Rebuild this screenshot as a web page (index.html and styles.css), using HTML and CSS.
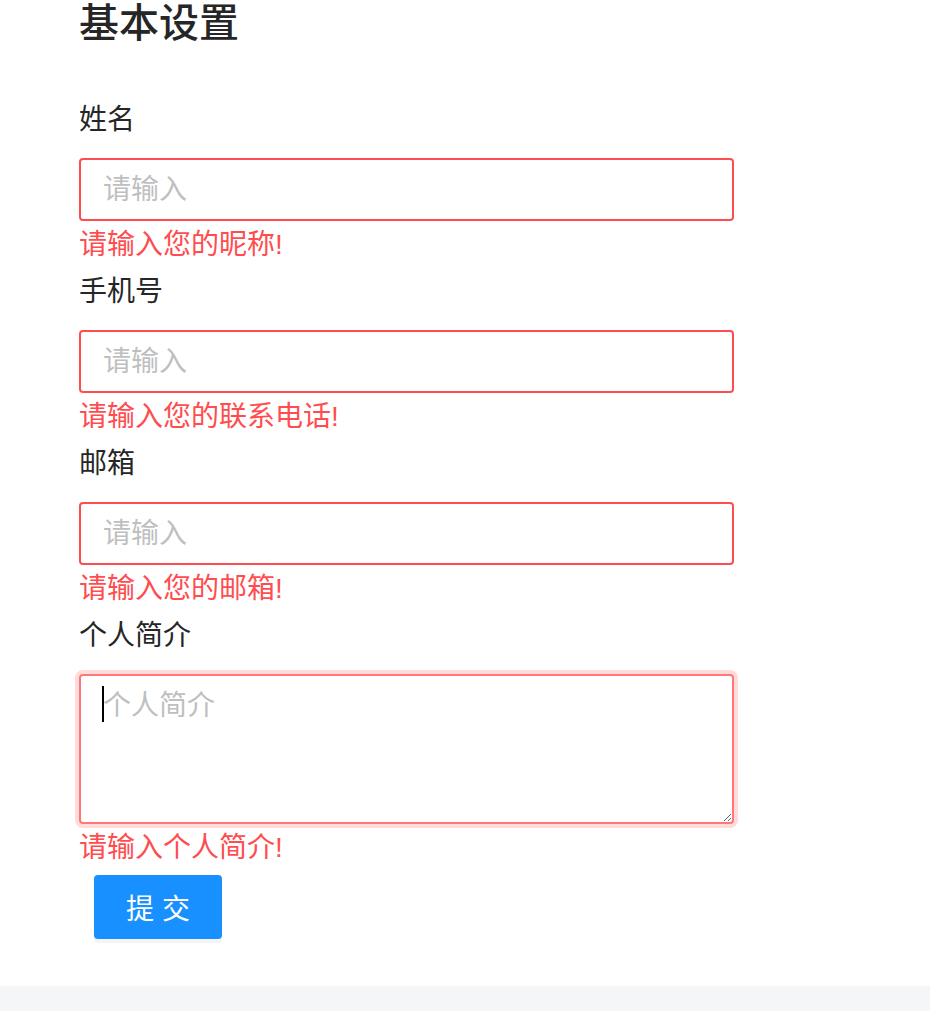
FILE: index.html
```html
<!DOCTYPE html>
<html lang="zh-CN">
<head>
<meta charset="utf-8">
<title>基本设置</title>
<link rel="stylesheet" href="styles.css">
</head>
<body>
<div class="page">
  <main class="content">
    <h2 class="title">基本设置</h2>
    <form class="form">
      <div class="item">
        <label class="label">姓名</label>
        <input class="input error" type="text" placeholder="请输入">
        <div class="explain">请输入您的昵称!</div>
      </div>
      <div class="item">
        <label class="label">手机号</label>
        <input class="input error" type="text" placeholder="请输入">
        <div class="explain">请输入您的联系电话!</div>
      </div>
      <div class="item">
        <label class="label">邮箱</label>
        <input class="input error" type="text" placeholder="请输入">
        <div class="explain">请输入您的邮箱!</div>
      </div>
      <div class="item">
        <label class="label">个人简介</label>
        <div class="textarea-wrap">
          <textarea class="textarea error focused" placeholder="个人简介"></textarea>
          <span class="caret"></span>
        </div>
        <div class="explain">请输入个人简介!</div>
      </div>
      <div class="actions">
        <button type="button" class="btn">提 交</button>
      </div>
    </form>
  </main>
  <footer class="footer"></footer>
</div>
</body>
</html>
```
FILE: styles.css
```css
* { box-sizing: border-box; }
html, body { margin: 0; padding: 0; background: #fff; }
body {
  font-family: "Liberation Sans", "Noto Sans CJK SC", sans-serif;
  color: #262626;
  font-size: 28px;
}
.page {
  min-height: 1011px;
  display: flex;
  flex-direction: column;
}
.content {
  flex: 1;
  padding-left: 79px;
}
.title {
  margin: 0;
  font-size: 40px;
  font-weight: 500;
  line-height: 46px;
  color: #262626;
}
.form {
  width: 655px;
  margin-top: 52px;
  display: flex;
  flex-direction: column;
}
.item {
  display: flex;
  flex-direction: column;
}
.label {
  display: block;
  line-height: 44px;
  padding-bottom: 16px;
  color: #262626;
}
.input {
  width: 100%;
  height: 63px;
  padding: 8px 22px;
  font: inherit;
  font-size: 28px;
  color: #262626;
  border: 2px solid #d9d9d9;
  border-radius: 4px;
  outline: none;
  background: #fff;
}
.input.error { border-color: #ff4d4f; }
.input::placeholder, .textarea::placeholder { color: #bfbfbf; }
.textarea-wrap { position: relative; }
.textarea {
  display: block;
  width: 100%;
  height: 150px;
  padding: 8px 22px;
  font: inherit;
  font-size: 28px;
  line-height: 44px;
  border: 2px solid #d9d9d9;
  border-radius: 4px;
  outline: none;
  background: #fff;
  resize: vertical;
}
.textarea.error.focused {
  border-color: #ff7875;
  box-shadow: 0 0 0 4px rgba(255, 77, 79, 0.2);
}
.caret {
  position: absolute;
  left: 23px;
  top: 12px;
  width: 2px;
  height: 36px;
  background: #000;
}
.explain {
  min-height: 49px;
  line-height: 48px;
  color: #ff4d4f;
}
.actions {
  padding-left: 15px;
  padding-top: 2px;
}
.btn {
  width: 128px;
  height: 64px;
  font: inherit;
  font-size: 28px;
  color: #fff;
  background: #1890ff;
  border: 2px solid #1890ff;
  border-radius: 4px;
  box-shadow: 0 4px 0 rgba(0, 0, 0, 0.045);
  letter-spacing: 0;
  cursor: pointer;
}
.footer {
  height: 25px;
  background: #f5f6f8;
}
```
